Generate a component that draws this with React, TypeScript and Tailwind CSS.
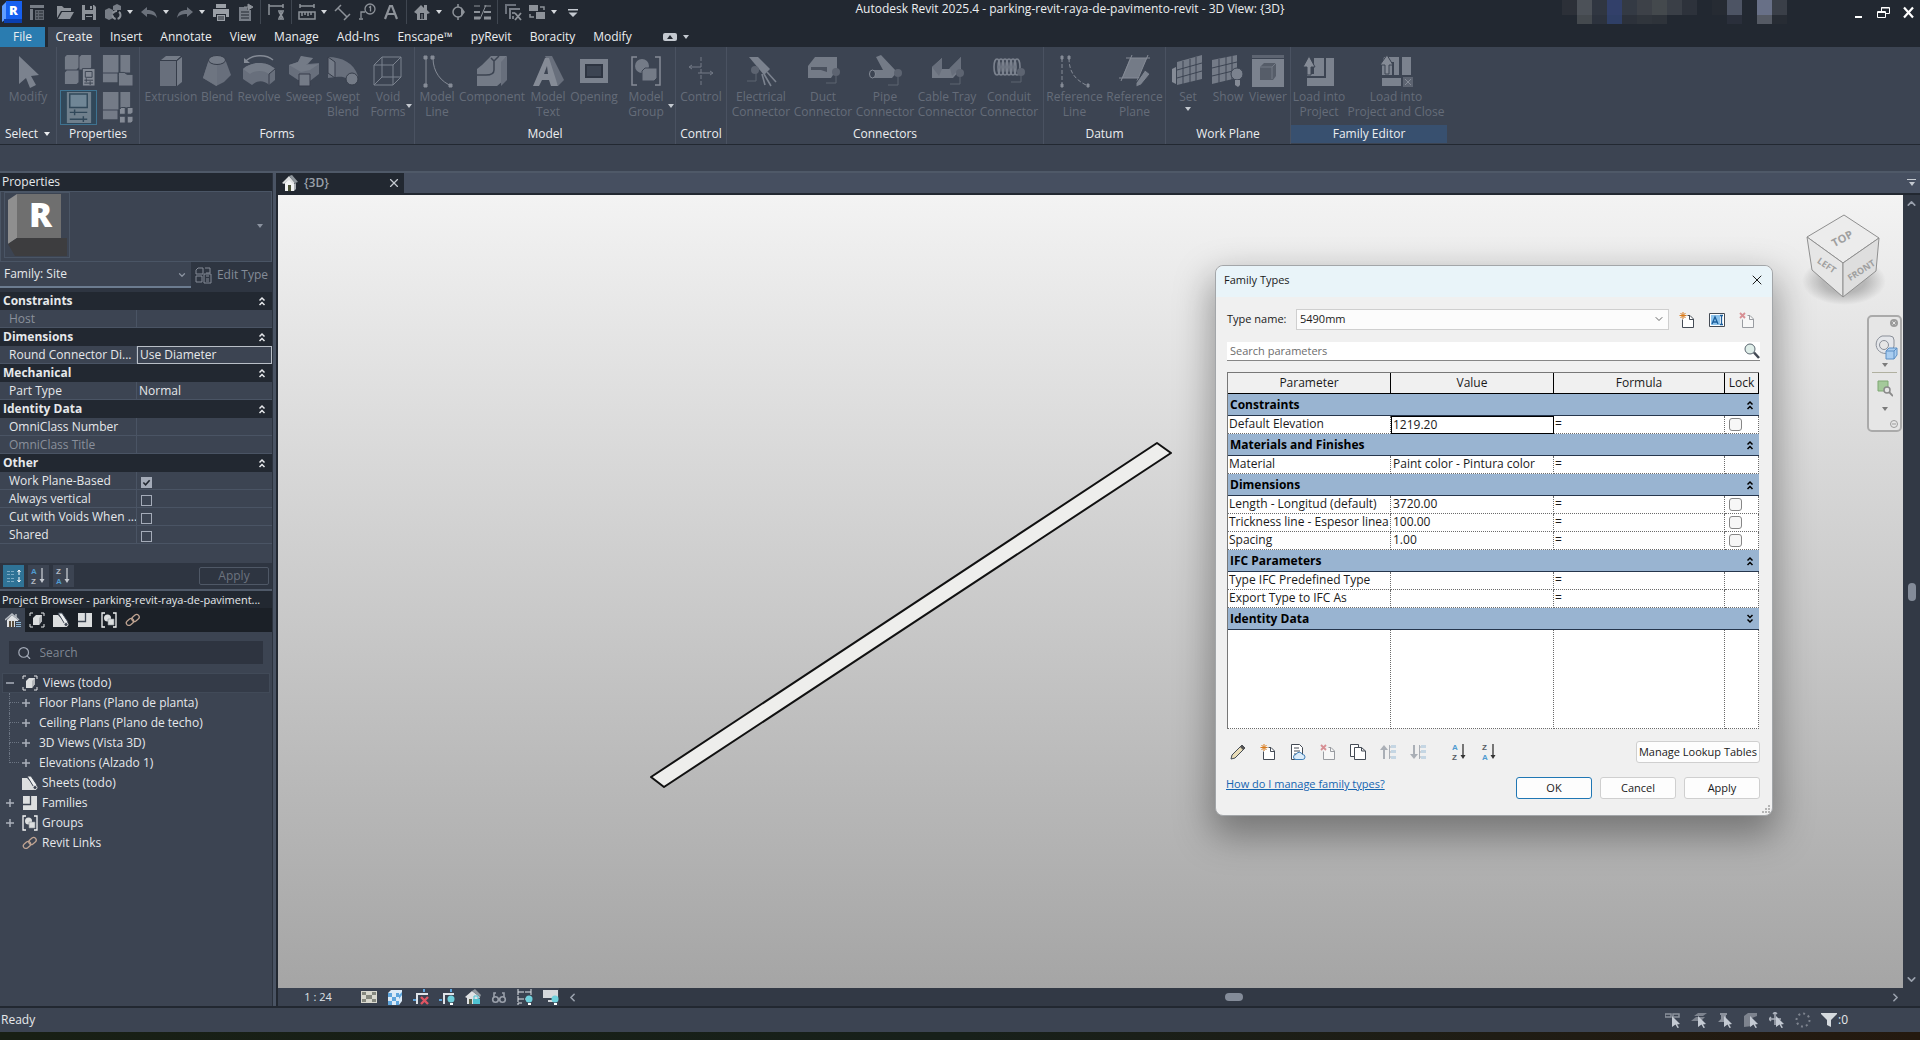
import React, { useState } from "react";
import { ChevronDown, ChevronLeft, ChevronRight, ChevronUp, Search, X } from "lucide-react";

type IconProps = { className?: string };

const Caret = ({ className = "" }: IconProps) => (
  <svg viewBox="0 0 8 5" className={`w-2 h-[5px] shrink-0 ${className}`} fill="currentColor">
    <path d="M1 0h6L4 4z" />
  </svg>
);

const DoubleChevron = ({ down = false }: { down?: boolean }) => (
  <svg viewBox="0 0 8 10" className="w-2 h-[10px]" fill="none" stroke="currentColor" strokeWidth="1.5">
    {down ? <path d="M1.5 1L4 3.5 6.5 1M1.5 5.5L4 8l2.500-2.500" /> : <path d="M1.5 4.500L4 2l2.500 2.500M1.5 9L4 6.500 6.500 9" />}
  </svg>
);

/* ---------- quick access toolbar ---------- */

const quickIcons: Record<string, React.ReactNode> = {
  recent: (
    <g>
      <path d="M2 2h14v3H2zM2 6h3v11H2z" fill="#777d86" />
      <path d="M7 7h9v10H7z" fill="#60666f" />
      <path d="M8 9h2M11 9h4M8 12h2M11 12h4M8 15h2M11 15h4" stroke="#222831" />
    </g>
  ),
  open: (
    <g fill="#8d9299">
      <path d="M1 3h5l2 2h7v3H5L1 15z" />
      <path d="M6 9h12l-4 7H2z" />
    </g>
  ),
  save: (
    <g>
      <path d="M2 2h12l2 2v13H2z" fill="#8d9299" />
      <path d="M5 2h8v5H5zM5 11h8v6H5z" fill="#222831" />
      <path d="M10 3h2v3h-2zM6 13h6v1H6z" fill="#8d9299" />
    </g>
  ),
  sync: (
    <g fill="#777d86">
      <path d="M1 7l4-2 4 2v8l-4 2-4-2zM9 3l4-2 4 2v4H9z" />
      <circle cx="12.5" cy="12" r="4" stroke="#8d9299" strokeDasharray="5 2" fill="none" strokeWidth="2" />
    </g>
  ),
  undo: <path d="M1 9l6-5v3c6 0 9 2 10 8-2-3-5-4-10-4v3z" fill="#6b717b" />,
  redo: <path d="M17 9l-6-5v3c-6 0-9 2-10 8 2-3 5-4 10-4v3z" fill="#6b717b" />,
  print: (
    <g fill="#9a9fa6">
      <path d="M4 1h10v4H4zM1 6h16v8h-3v-3H4v3H1z" />
      <path d="M5 12h8v6H5z" />
      <path d="M6 14h6M6 16h6" stroke="#222831" />
    </g>
  ),
  exportPdf: (
    <g>
      <path d="M3 4h8v3h4v11H3z" fill="#777d86" />
      <path d="M5 9h8M5 12h8M5 15h8" stroke="#222831" />
      <path d="M8 4h6M12 1l5 3-5 3z" stroke="#8d9299" fill="#8d9299" />
    </g>
  ),
  measure: (
    <g fill="none" stroke="#8d9299" strokeWidth="1.5">
      <path d="M2 1v11M16 1v4M2 3h14M11 8h6M11 16h6M14 8v8" />
      <path d="M12 9l4 6M16 9l-4 6" />
    </g>
  ),
  ruler: (
    <g fill="none" stroke="#8d9299" strokeWidth="1.5">
      <path d="M2 3h14M2 1v4M16 1v4" />
      <path d="M1 9h16v7H1zM4 9v4M7 9v3M10 9v4M13 9v3" />
    </g>
  ),
  aligned: (
    <g fill="none" stroke="#8d9299" strokeWidth="1.5">
      <path d="M4 5l9 9M1 8l6-6M10 17l6-6" />
    </g>
  ),
  tag: (
    <g fill="none" stroke="#8d9299" strokeWidth="1.3">
      <circle cx="12" cy="6" r="5" />
      <path d="M11 4.5l1.500-1v5M7 9H3v6M1 16h4" />
    </g>
  ),
  text: <path d="M3 16L8 3h2l5 13M5 11h8" fill="none" stroke="#8d9299" strokeWidth="2.2" />,
  house: (
    <g>
      <path d="M1 9l7-7 3 3V2h3v5l3 3-3 1v6H4v-6z" fill="#8d9299" />
      <path d="M7 10h4v6H7z" fill="#222831" />
      <path d="M8.5 11h1v5h-1z" fill="#8d9299" />
    </g>
  ),
  section: (
    <g fill="none" stroke="#8d9299" strokeWidth="1.5">
      <circle cx="9" cy="9" r="5" />
      <path d="M9 1v3M9 14v3" />
      <path d="M12 4l4 5-4 5z" fill="#8d9299" stroke="none" />
    </g>
  ),
  thin: (
    <g stroke="#8d9299">
      <path d="M1 3h6M11 3h7" strokeWidth="1" />
      <path d="M1 9h6M11 9h7" strokeWidth="2" />
      <path d="M1 15h6M11 15h7" strokeWidth="3" />
      <path d="M7 16L13 2" />
    </g>
  ),
  closeViews: (
    <g>
      <path d="M1 1h11v2H3v8H1z" fill="#6b717b" />
      <path d="M5 5h11v2H7v9H5zM8 9h3v2H8zM8 13h2v3H8z" fill="#777d86" />
      <path d="M11 10l6 7M17 10l-6 7" stroke="#8d9299" strokeWidth="1.8" />
    </g>
  ),
  switchViews: (
    <g>
      <path d="M1 2h9v6H1zM8 9h9v7H8z" fill="#8d9299" />
      <path d="M12 4h4v3M6 14H2v-3" fill="none" stroke="#8d9299" strokeWidth="1.5" />
    </g>
  ),
  customize: <path d="M4 6h10v1.500H4zM4.500 9.500h9L9 14z" fill="#c4c9d0" />,
};

const quickItems = [
  "recent", "gap", "open", "save", "sync", "caret", "undo", "caret", "redo", "caret", "print", "exportPdf", "sep",
  "measure", "sep", "ruler", "caret", "aligned", "tag", "text", "sep", "house", "caret", "section", "thin", "sep",
  "closeViews", "switchViews", "caret", "customize",
];

const mosaicTop = [
  "#2c3038", "#4c5158", "#303641", "#32406a", "#343a44", "#3d4148", "#44494d", "#3a3f47", "#2d323b", "#222831",
  "#262b33", "#4d5464", "#222831", "#687087", "#3a3f48",
];
const mosaicBottom = [
  "#222831", "#44494e", "#2c323d", "#2f3f66", "#2c313a", "#30353c", "#2e333a", "#222831", "#222831", "#222831",
  "#222831", "#2a2f3b", "#222831", "#555a64", "#272c34",
];

function TitleBar() {
  return (
    <header className="flex h-[27px] items-start">
      <div className="flex h-6 items-center gap-[6px] pl-[2px]">
        <svg viewBox="0 0 20 22" className="h-[22px] w-5">
          <path d="M0 5l4-4v17l-4 3z" fill="#5f9dff" />
          <path d="M4 0h16v18H4z" fill="#1660f0" />
          <path d="M2 18h18v4H2z" fill="#0a3fb0" />
          <text x="7" y="14" fontFamily="Open Sans, sans-serif" fontWeight="800" fontSize="13" fill="#fff">R</text>
        </svg>
        {quickItems.map((item, i) => {
          if (item === "gap") return <span key={i} className="-mr-[2px]" />;
          if (item === "sep") return <span key={i} className="h-6 w-px bg-[#3f4650]" />;
          if (item === "caret") return <Caret key={i} className="-ml-[2px] text-[#d5d8dc]" />;
          return (
            <button key={i} aria-label={item} className="h-[18px] w-[18px] shrink-0">
              <svg viewBox="0 0 18 18">{quickIcons[item]}</svg>
            </button>
          );
        })}
      </div>
      <h1 className="flex-1 whitespace-nowrap pr-1 text-center text-[12px] leading-[18px] text-[#eceef0]">
        Autodesk Revit 2025.4 - parking-revit-raya-de-pavimento-revit - 3D View: {"{3D}"}
      </h1>
      <div className="flex w-[358px] justify-between">
        <div>
          <div className="flex">
            {mosaicTop.map((color, i) => (
              <span key={i} className="h-[15px] w-[15px]" style={{ backgroundColor: color }} />
            ))}
          </div>
          <div className="flex">
            {mosaicBottom.map((color, i) => (
              <span key={i} className="h-[9px] w-[15px]" style={{ backgroundColor: color }} />
            ))}
          </div>
        </div>
        <div className="flex items-center gap-3 pr-[5px] text-white">
          <button aria-label="Minimize">
            <svg viewBox="0 0 13 13" className="w-[13px]"><path d="M3 10h7v2H3z" fill="currentColor" /></svg>
          </button>
          <button aria-label="Restore">
            <svg viewBox="0 0 13 13" className="w-[13px]" fill="none" stroke="currentColor">
              <path d="M4.500 5V1.500h8v6H9M4 2h8M.5 5.500h8v6h-8zM1 6.500h7" />
            </svg>
          </button>
          <button aria-label="Close">
            <svg viewBox="0 0 13 13" className="w-[13px]" stroke="currentColor" strokeWidth="2.2">
              <path d="M2 1.500l9 10M11 1.500l-9 10" />
            </svg>
          </button>
        </div>
      </div>
    </header>
  );
}

const menuTabs = [
  "Insert", "Annotate", "View", "Manage", "Add-Ins", "Enscape™", "pyRevit", "Boracity", "Modify",
];

function MenuTabs() {
  return (
    <nav className="flex h-5 text-[12px] leading-5 text-[#eceef0]">
      <button className="w-[45px] bg-[#2a7cb0]">File</button>
      <button className="ml-[3px] mr-px w-[52px] bg-[#3c4452]">Create</button>
      {menuTabs.map((tab) => (
        <button key={tab} className="px-[9px]">{tab}</button>
      ))}
      <button aria-label="Minimize ribbon" className="ml-[22px] flex items-center gap-[5px] text-[#c4c9d0]">
        <svg viewBox="0 0 14 8" className="w-[14px]">
          <rect width="14" height="8" rx="2" fill="currentColor" />
          <path d="M4 6l3-4 3 4z" fill="#222831" />
        </svg>
        <Caret />
      </button>
    </nav>
  );
}

/* ---------- ribbon ---------- */

const L = "#747b87";
const M = "#686f7c";
const D = "#3c4452";

const ribbonIcons: Record<string, React.ReactNode> = {
  modify: <path d="M8 2l20 19-8 1 5 9-6 3-4-10-7 6z" fill="#7b828e" />,
  extrusion: (
    <g>
      <path d="M6 7h16v25H6z" fill={M} />
      <path d="M7 6l5-4h15l-4 4z" fill={L} />
      <path d="M23 7l5-4v25l-5 4z" fill={L} />
      <path d="M6 6.500h16.500V32M22.500 6.500L28 2" stroke="#363d4a" fill="none" />
    </g>
  ),
  blend: (
    <g>
      <path d="M9 5h16l6 16-7 7-8 4L3 24z" fill={M} />
      <path d="M9 6l8 4v22L3 24z" fill="#6e7581" />
      <ellipse cx="17" cy="6" rx="8.500" ry="4.500" fill={L} stroke="#363d4a" />
    </g>
  ),
  revolve: (
    <g>
      <path d="M3 8C10 0 24 0 31 6" stroke="#858b96" strokeWidth="1.5" fill="none" />
      <path d="M2 4v5h6z" fill="#858b96" />
      <path d="M1 15c8-8 24-8 32 0v11l-6 5c-5-5-12-5-17 0l-9-6z" fill={M} />
      <path d="M1 15c8-8 24-8 32 0l-6 5c-5-4-14-4-19 0z" fill={L} />
      <path d="M27 31V20l6-5" fill="none" stroke="#363d4a" />
    </g>
  ),
  sweep: (
    <g>
      <path d="M2 11l9-3 3-6 6 2h6l-5 6 11-1v11l-9 7-12-1-9-6z" fill={M} />
      <path d="M2 11l9-3 3-6 12 2-7 7 13-1-9 6-9 2z" fill={L} />
      <path d="M12 20h11v12H12z" fill={L} stroke="#363d4a" />
    </g>
  ),
  sweptBlend: (
    <g>
      <path d="M2 3c14 0 26 6 30 19l-8 6c-3-5-8-6-14-5l-8 1z" fill={M} />
      <path d="M2 3l7 5v16l-7-5z" fill={L} stroke="#363d4a" />
      <circle cx="26" cy="25" r="6" fill={L} stroke="#363d4a" />
    </g>
  ),
  voidForms: (
    <g fill="none" stroke="#7b828e">
      <path d="M3 11h19v20H3zM3 11l8-8h19v20l-8 8M22 11l8-8M11 3v20h19M11 23l-8 8" />
    </g>
  ),
  modelLine: (
    <g stroke="#858b96" fill="none">
      <path d="M6 4v28M13 4c0 14 8 24 19 28" />
      <path d="M4 2h3v3H4zM11 2h3v3h-3zM4 30h3v3H4zM29 30h3v3h-3z" fill="#858b96" />
    </g>
  ),
  component: (
    <g>
      <path d="M2 15l5-4 9-9h16l-4 5v20l-6 5H2z" fill={L} />
      <path d="M26 8l6-6v24l-6 6z" fill={M} />
      <path d="M16 4l3 3v9c0 3-3 5-8 5H2M19 7l5-5" stroke={D} fill="none" strokeWidth="1.5" />
    </g>
  ),
  modelText: (
    <g>
      <path d="M14 2h7l12 24-6 6z" fill={M} />
      <path d="M2 32L14 4h4l9 28h-7l-2-6h-7l-3 6zM13 20h4l-1-8z" fill="#858b96" fillRule="evenodd" />
    </g>
  ),
  opening: (
    <g>
      <path d="M3 5h28v24H3zM9 11v12h16V11z" fill="#7b828e" fillRule="evenodd" />
      <path d="M9 11h16v12H9z" fill="none" stroke="#2d3441" strokeWidth="2" />
      <path d="M12 14h10v6H12z" fill={D} />
    </g>
  ),
  modelGroup: (
    <g>
      <path d="M8 3H3v28h5M26 3h5v28h-5" stroke="#858b96" fill="none" strokeWidth="1.5" />
      <circle cx="13" cy="12" r="7" fill={L} />
      <path d="M13 17l3-3h12v10l-3 3H13z" fill={L} stroke={D} />
    </g>
  ),
  control: (
    <g stroke="#747b87" fill="none">
      <path d="M17 3v28" strokeDasharray="4 2" />
      <path d="M6 13h11M8 11l-3 2 3 2M14 19h14M26 17l3 2-3 2" />
    </g>
  ),
  electrical: (
    <g>
      <path d="M5 3h9l12 12-6 6z" fill="#7b828e" />
      <path d="M23 18l9 10M20 20l7 12M18 20l3 11" stroke="#7b828e" strokeWidth="1.6" />
      <circle cx="11" cy="16" r="4" fill="#5d6471" />
      <path d="M12 19v8H3" stroke="#5d6471" fill="none" />
    </g>
  ),
  duct: (
    <g>
      <path d="M2 12l7-9h22v12l-6 9H2z" fill={L} />
      <path d="M5 13h16v5l-6-2H5z" fill="#4a515e" />
      <circle cx="30" cy="18" r="4" fill="#5d6471" />
      <path d="M30 22v7H20" stroke="#5d6471" fill="none" />
    </g>
  ),
  pipe: (
    <g>
      <path d="M8 3l5-2 16 17-5 6H5c-4 0-4-8 0-8h10z" fill={L} />
      <ellipse cx="4.500" cy="20" rx="3" ry="4" fill={D} stroke="#858b96" />
      <circle cx="30" cy="19" r="4" fill="#5d6471" />
      <path d="M30 23v8H20" stroke="#5d6471" fill="none" />
    </g>
  ),
  cableTray: (
    <g>
      <path d="M2 13L12 4v11h7L31 3v12l-8 9H2z" fill={L} />
      <path d="M2 13l7 9 3-7V4zM20 14L31 3v11l-9 8z" fill={M} />
      <circle cx="30" cy="19" r="4" fill="#5d6471" />
      <path d="M30 22v8H20" stroke="#5d6471" fill="none" />
    </g>
  ),
  conduit: (
    <g fill="none" stroke="#7b828e" strokeWidth="1.600">
      {[5, 9, 13, 17, 21, 25].map((x) => <ellipse key={x} cx={x} cy="13" rx="3" ry="8" />)}
      <circle cx="29" cy="18" r="4" fill="#5d6471" stroke="none" />
      <path d="M29 21v7H19" stroke="#5d6471" strokeWidth="1" />
    </g>
  ),
  referenceLine: (
    <g stroke="#858b96" fill="none">
      <path d="M4 4v28M11 4c0 14 6 22 19 28" strokeDasharray="4 2" />
      <path d="M3 2h2v3H3zM10 2h2v3h-2zM3 30h2v3H3zM29 30h2v3h-2z" fill="#858b96" />
    </g>
  ),
  referencePlane: (
    <g>
      <path d="M12 4h17l-9 20H4z" fill={L} />
      <path d="M8 4h24M1 24h22M14 1L3 27M30 1L19 27" stroke="#858b96" fill="none" />
      <path d="M18 29l9-13 5 4-9 11-5 2z" fill="#7b828e" stroke={D} />
    </g>
  ),
  setPlane: (
    <g>
      <path d="M1 15l4-2v17l-4-2z" fill="#858b96" />
      <path d="M6 8l25-7v24L6 31z" fill={L} />
      <path d="M12 7v23M19 5v24M25 3v24M6 16l25-7M6 24l25-7" stroke={D} />
    </g>
  ),
  showPlane: (
    <g>
      <path d="M1 6l25-5v23L1 30z" fill={L} />
      <path d="M8 5v24M15 3v24M21 2v24M1 14l25-6M1 22l25-6" stroke={D} />
      <circle cx="26" cy="20" r="6" fill="#7b828e" stroke={D} />
      <path d="M24 26h5v5l-2 2-3-2z" fill="#858b96" />
    </g>
  ),
  viewer: (
    <g>
      <path d="M1 1h32v3H1z" fill="#5d6471" />
      <path d="M1 5h32v28H1z" fill="#7b828e" />
      <path d="M9 13l4-4h12v13l-3 4H9z" fill="#565d69" />
      <path d="M9 13h12v12M21 13l4-4" stroke="#737a86" fill="none" />
    </g>
  ),
  loadProject: (
    <g>
      <path d="M12 4h20v28H5V20h7z" fill="#7b828e" />
      <path d="M23 4v19H5" fill="none" stroke={D} strokeWidth="2" />
      <path d="M1 13L7 2l6 11h-4v8H5v-8z" fill="#858b96" stroke={D} />
    </g>
  ),
  loadClose: (
    <g>
      <path d="M5 3h15v18H3V10zM23 3h9v18h-9zM3 24h19v8H3z" fill="#7b828e" />
      <path d="M14 8v13" stroke={D} strokeWidth="2" />
      <path d="M1 11L8 1l6 10h-4v9H6v-9z" fill="#858b96" stroke={D} />
      <path d="M24 23h10v10H24z" fill="#5d6471" />
      <path d="M26 25l6 6M32 25l-6 6" stroke="#858b96" />
    </g>
  ),
  typeProps: (
    <g>
      <path d="M3 3l2-2h12v13l-2 2H3zM18 3l2-2h10v13l-2 2H18zM3 19l2-2h12v12l-2 2H3z" fill={L} />
      <path d="M21 15h13v18H21z" fill="#858b96" stroke={D} />
      <path d="M24 18h7v6h-7zM23 27h9M23 30h9M25 25v4M29 28v4" stroke={D} fill="none" />
    </g>
  ),
  familyCategory: (
    <g>
      <path d="M2 1h16v18H2zM20 1h10v18H20zM2 20h15v9H2z" fill={L} />
      <path d="M18 22v-3h6l3 2h6v12H18z" fill={L} stroke={D} />
    </g>
  ),
  propsPalette: (
    <g>
      <path d="M5 1h25v32H5z" fill="#6f7f8c" />
      <path d="M8 3h18v14H8z" fill="#708696" stroke="#31485a" strokeWidth="1.5" />
      <path d="M8 22h18M8 29h18M13 19v6M22 26v6" stroke="#31485a" strokeWidth="1.5" />
    </g>
  ),
  familyTypes: (
    <g>
      <path d="M2 1h16v18H2zM20 1h10v16H20zM2 20h15v9H2z" fill={L} />
      <path d="M19 19l2-2h4v7h-6zM27 17h6v5l-2 2h-4zM19 26h6v7h-6zM27 26h6v5l-2 2h-4z" fill="#858b96" stroke={D} />
    </g>
  ),
};

type RibbonItem = { icon: string; lines: string[]; width: string; menu?: "side" | "below" };
type RibbonPanel = { label: string; width: string; items: RibbonItem[]; highlight?: boolean };

const ribbonPanels: RibbonPanel[] = [
  {
    label: "Forms",
    width: "w-[275px]",
    items: [
      { icon: "extrusion", lines: ["Extrusion"], width: "w-[60px]" },
      { icon: "blend", lines: ["Blend"], width: "w-8" },
      { icon: "revolve", lines: ["Revolve"], width: "w-[52px]" },
      { icon: "sweep", lines: ["Sweep"], width: "w-[38px]" },
      { icon: "sweptBlend", lines: ["Swept", "Blend"], width: "w-10" },
      { icon: "voidForms", lines: ["Void", "Forms"], width: "w-[50px]", menu: "side" },
    ],
  },
  {
    label: "Model",
    width: "w-[261px]",
    items: [
      { icon: "modelLine", lines: ["Model", "Line"], width: "w-11" },
      { icon: "component", lines: ["Component"], width: "w-[66px]" },
      { icon: "modelText", lines: ["Model", "Text"], width: "w-[46px]" },
      { icon: "opening", lines: ["Opening"], width: "w-[46px]" },
      { icon: "modelGroup", lines: ["Model", "Group"], width: "w-[58px]", menu: "side" },
    ],
  },
  {
    label: "Control",
    width: "w-[51px]",
    items: [{ icon: "control", lines: ["Control"], width: "w-[50px]" }],
  },
  {
    label: "Connectors",
    width: "w-[317px]",
    items: [
      { icon: "electrical", lines: ["Electrical", "Connector"], width: "w-[62px]" },
      { icon: "duct", lines: ["Duct", "Connector"], width: "w-[62px]" },
      { icon: "pipe", lines: ["Pipe", "Connector"], width: "w-[62px]" },
      { icon: "cableTray", lines: ["Cable Tray", "Connector"], width: "w-[62px]" },
      { icon: "conduit", lines: ["Conduit", "Connector"], width: "w-[62px]" },
    ],
  },
  {
    label: "Datum",
    width: "w-[122px]",
    items: [
      { icon: "referenceLine", lines: ["Reference", "Line"], width: "w-[60px]" },
      { icon: "referencePlane", lines: ["Reference", "Plane"], width: "w-[60px]" },
    ],
  },
  {
    label: "Work Plane",
    width: "w-[125px]",
    items: [
      { icon: "setPlane", lines: ["Set"], width: "w-10", menu: "below" },
      { icon: "showPlane", lines: ["Show"], width: "w-10" },
      { icon: "viewer", lines: ["Viewer"], width: "w-10" },
    ],
  },
  {
    label: "Family Editor",
    width: "w-[156px]",
    highlight: true,
    items: [
      { icon: "loadProject", lines: ["Load into", "Project"], width: "w-[54px]" },
      { icon: "loadClose", lines: ["Load into", "Project and Close"], width: "w-[100px]" },
    ],
  },
];

function RibbonButton({ icon, lines, width, menu }: RibbonItem) {
  return (
    <button className={`relative flex shrink-0 flex-col items-center whitespace-nowrap ${width}`}>
      <svg viewBox="0 0 34 34" className="h-[34px] w-[34px]">{ribbonIcons[icon]}</svg>
      <span className="mt-px text-[12px] leading-[15px] text-[#656c79]">
        {lines.map((line) => (
          <span key={line} className="block">{line}</span>
        ))}
      </span>
      {menu === "below" && <Caret className="mt-[3px] text-[#c4c9d0]" />}
      {menu === "side" && <Caret className="absolute right-0 top-[50px] text-[#c4c9d0]" />}
    </button>
  );
}

function Ribbon() {
  return (
    <section className="flex h-[98px] border-b border-[#222831] bg-[#3c4452] text-[12px]">
      <div className="flex w-[57px] shrink-0 flex-col border-r border-[#4a5261]">
        <div className="flex h-[78px] justify-center pt-[7px]">
          <RibbonButton icon="modify" lines={["Modify"]} width="w-[50px]" />
        </div>
        <button className="flex items-center gap-[5px] pl-[5px] leading-[18px] text-[#eceef0]">
          Select <Caret />
        </button>
      </div>
      <div className="flex w-[83px] shrink-0 flex-col border-r border-[#4a5261]">
        <div className="grid h-[78px] grid-cols-2 gap-x-[3px] gap-y-px px-[3px] pt-[6px]">
          {["typeProps", "familyCategory", "propsPalette", "familyTypes"].map((name) => (
            <button
              key={name}
              aria-label={name}
              className={`flex h-[35px] items-center justify-center ${
                name === "propsPalette" ? "border border-[#3f7391] bg-[#31485a]" : ""
              }`}
            >
              <svg viewBox="0 0 34 34" className="h-[33px] w-[33px]">{ribbonIcons[name]}</svg>
            </button>
          ))}
        </div>
        <div className="text-center leading-[18px] text-[#eceef0]">Properties</div>
      </div>
      {ribbonPanels.map((panel) => (
        <div
          key={panel.label}
          className={`flex shrink-0 flex-col ${panel.width} ${panel.highlight ? "" : "border-r border-[#4a5261]"}`}
        >
          <div className="flex h-[78px] justify-center pt-[7px]">
            {panel.items.map((item) => (
              <RibbonButton key={item.icon} {...item} />
            ))}
          </div>
          <div className={`text-center leading-[18px] text-[#eceef0] ${panel.highlight ? "bg-[#38506f]" : ""}`}>
            {panel.label}
          </div>
        </div>
      ))}
    </section>
  );
}

/* ---------- properties palette ---------- */

type PropRow = { name: string; value?: string; checked?: boolean; dim?: boolean; selected?: boolean };

const propGroups: { title: string; rows: PropRow[] }[] = [
  { title: "Constraints", rows: [{ name: "Host", dim: true }] },
  { title: "Dimensions", rows: [{ name: "Round Connector Di...", value: "Use Diameter", selected: true }] },
  { title: "Mechanical", rows: [{ name: "Part Type", value: "Normal" }] },
  { title: "Identity Data", rows: [{ name: "OmniClass Number" }, { name: "OmniClass Title", dim: true }] },
  {
    title: "Other",
    rows: [
      { name: "Work Plane-Based", checked: true },
      { name: "Always vertical", checked: false },
      { name: "Cut with Voids When ...", checked: false },
      { name: "Shared", checked: false },
    ],
  },
];

function PropCheckbox({ label, initial }: { label: string; initial: boolean }) {
  const [checked, setChecked] = useState(initial);
  return (
    <input
      type="checkbox"
      aria-label={label}
      checked={checked}
      onChange={() => setChecked(!checked)}
      className="mt-1 ml-[2px] block h-[11px] w-[11px] appearance-none border border-[#a4abb8] checked:bg-[#a4abb8] checked:bg-[url('data:image/svg+xml,%3Csvg%20xmlns=%22http://www.w3.org/2000/svg%22%20viewBox=%220%200%2010%2010%22%3E%3Cpath%20d=%22M1.5%205l2.5%202.5L8.5%202.5%22%20fill=%22none%22%20stroke=%22%23222831%22%20stroke-width=%221.8%22/%3E%3C/svg%3E')]"
    />
  );
}

const SortLetters = ({ top, bottom, color, arrow }: { top: string; bottom: string; color: string; arrow: string }) => (
  <svg
    viewBox="0 0 18 20"
    className="h-5 w-[18px] overflow-visible"
    fontFamily="Liberation Sans, sans-serif"
    fontSize="8"
    fontWeight="700"
  >
    <text x="2" y="8" fill={top === "A" ? "#4f9bd0" : color}>{top}</text>
    <text x="2" y="18" fill={bottom === "A" ? "#4f9bd0" : color}>{bottom}</text>
    <path d="M13 2v13" stroke={arrow} strokeWidth="1.3" />
    <path d="M10.5 13h5L13 17z" fill={arrow} />
  </svg>
);

function PropertiesPalette() {
  return (
    <section>
      <h2 className="h-[18px] bg-[#222831] pl-[2px] leading-[18px]">Properties</h2>
      <div className="flex h-[71px] items-start justify-between border border-[#4a5565] px-[3px]">
        <div className="h-[66px] w-[66px] border border-[#4a5565]">
          <svg viewBox="0 0 64 64">
            <path d="M3 7l9-6v44l-9 6z" fill="#8f8f8f" />
            <path d="M12 1h44v44H12z" fill="#6f6f6f" />
            <path d="M3 51l9-6h50v18H10z" fill="#3d3d3f" />
            <text x="24" y="34" fontFamily="Open Sans, sans-serif" fontWeight="800" fontSize="34" fill="#fff">R</text>
          </svg>
        </div>
        <Caret className="mt-8 mr-1 text-[#8b93a0]" />
      </div>
      <div className="flex h-[30px] bg-[#2e3541]">
        <div className="relative mb-1 w-[191px] border-b-2 border-[#6c7c90] bg-[#3c4452]">
          <select aria-label="Family" className="h-full w-full appearance-none pl-1 text-[12px]">
            <option>Family: Site</option>
          </select>
          <ChevronDown size={10} strokeWidth={3} className="absolute right-1 top-2 text-[#8b93a0]" />
        </div>
        <button className="flex flex-1 items-center justify-center gap-[5px] pb-1 text-[#848b97]">
          <svg viewBox="0 0 17 17" className="w-[17px]" fill="none" stroke="currentColor">
            <path d="M1 3l2-2h5v6H1zM10 1h5v5h-4M1 9h6v6H1z" />
            <path d="M9 7h7v9H9zM11 9h3M11 12h3M11 14h3" />
          </svg>
          Edit Type
        </button>
      </div>
      <table className="w-full table-fixed border-separate border-spacing-0">
        <colgroup>
          <col className="w-[137px]" />
          <col />
        </colgroup>
        {propGroups.map((group) => (
          <tbody key={group.title}>
            <tr className="h-[18px] bg-[#222831]">
              <th colSpan={2} className="pl-[3px] text-left leading-[18px]">
                <div className="flex items-center justify-between pr-[6px]">
                  {group.title}
                  <button aria-label={`Collapse ${group.title}`}><DoubleChevron /></button>
                </div>
              </th>
            </tr>
            {group.rows.map((row) => (
              <tr key={row.name} className={row.dim ? "text-[#8a909b]" : ""}>
                <td className="h-[18px] overflow-hidden whitespace-nowrap border-r border-b border-[#4a5464] pl-[9px] leading-[17px]">
                  {row.name}
                </td>
                <td
                  className={`h-[18px] leading-[16px] pl-[2px] ${
                    row.selected ? "border border-[#b9bfc7]" : "border-b border-[#4a5464]"
                  }`}
                >
                  {row.checked === undefined ? row.value : <PropCheckbox label={row.name} initial={row.checked} />}
                </td>
              </tr>
            ))}
          </tbody>
        ))}
      </table>
      <div className="mt-[19px] flex h-[26px] items-center gap-1 bg-[#2e3541] px-[3px]">
        <button aria-label="Group" className="flex h-[22px] w-[21px] items-center justify-center bg-[#2f7396]">
          <svg viewBox="0 0 16 16" className="w-4" stroke="#9cc2d6">
            <path d="M1 3.5h8M1 6.500h8M1 10.5h8M1 13.5h8" strokeDasharray="3 1" strokeOpacity="0.7" />
            <path d="M13 2v5M13 9v5M11.5 4L13 2l1.500 2M11.500 12l1.500 2 1.500-2" stroke="#fff" fill="none" />
          </svg>
        </button>
        <button aria-label="Sort ascending" className="flex h-[22px] w-[21px] items-center bg-[#3c4452] pl-px">
          <SortLetters top="A" bottom="Z" color="#b5bbc4" arrow="#c4c9d0" />
        </button>
        <button aria-label="Sort descending" className="flex h-[22px] w-[21px] items-center bg-[#3c4452] pl-px">
          <SortLetters top="Z" bottom="A" color="#b5bbc4" arrow="#c4c9d0" />
        </button>
        <button disabled className="ml-auto h-[18px] w-[70px] rounded-[2px] border border-[#4f5866] leading-[16px] text-[#6c737f]">
          Apply
        </button>
      </div>
    </section>
  );
}

/* ---------- project browser ---------- */

const treeIcons: Record<string, React.ReactNode> = {
  views: (
    <g>
      <path d="M1 4V1h3M12 1h3v3M1 12v3h3M12 15h3v-3" fill="none" stroke="#e4e6e8" />
      <path d="M4 6l3-3h6v6l-3 4H4z" fill="#dcdedf" />
      <path d="M10 6l3-3v6l-3 4z" fill="#b5b8bb" />
    </g>
  ),
  sheets: (
    <g>
      <path d="M0 3h5l9 9v3H0z" fill="#dcdedf" />
      <path d="M5 1h4l6 9-2 4z" fill="#eceeef" stroke="#3c4452" />
      <circle cx="13" cy="12.5" r="2" fill="#3c4452" stroke="#dcdedf" />
    </g>
  ),
  families: (
    <g>
      <path d="M1 1h14v14H1z" fill="#dcdedf" />
      <path d="M8.5 1v8.500H1" fill="none" stroke="#3c4452" strokeWidth="1.3" />
    </g>
  ),
  groups: (
    <g>
      <path d="M4 1H1v14h3M12 1h3v14h-3" fill="none" stroke="#f2f3f4" strokeWidth="1.3" />
      <circle cx="6.5" cy="6" r="3.5" fill="#dcdedf" />
      <path d="M7 7h6v6H7z" fill="#dcdedf" stroke="#8b9099" strokeWidth="0.6" />
    </g>
  ),
  links: (
    <g fill="none" stroke="#c0a492" strokeWidth="1.3">
      <rect x="1" y="7.5" width="8" height="5" rx="2.5" transform="rotate(-40 5 10)" />
      <rect x="6.5" y="3.5" width="8" height="5" rx="2.5" transform="rotate(-40 10.5 6)" />
    </g>
  ),
  home: (
    <g>
      <path d="M2 8l5-5 6 5v7H2z" fill="#dfe1e3" />
      <path d="M0 8l7-6 7 6M11 2v3" fill="none" stroke="#b5bac1" strokeWidth="1.5" />
      <path d="M4 9h2v6H4zM7 9h2v6H7z" fill="#5b5040" />
      <path d="M10 9h6v7h-6z" fill="#3c4452" />
      <path d="M11 10.500h5M11 12.5h5M11 14.5h5" stroke="#8fb7d4" />
    </g>
  ),
};

const TreeIcon = ({ name }: { name: string }) => (
  <svg viewBox="0 0 16 16" className="h-4 w-4 shrink-0">{treeIcons[name]}</svg>
);

const viewFolders = [
  "Floor Plans (Plano de planta)",
  "Ceiling Plans (Plano de techo)",
  "3D Views (Vista 3D)",
  "Elevations (Alzado 1)",
];

const rootFolders = [
  { label: "Sheets (todo)", icon: "sheets", expandable: false },
  { label: "Families", icon: "families", expandable: true },
  { label: "Groups", icon: "groups", expandable: true },
  { label: "Revit Links", icon: "links", expandable: false },
];

const Toggle = ({ minus = false }: { minus?: boolean }) => (
  <svg viewBox="0 0 8 8" className="h-2 w-2 shrink-0" stroke="#aab0bb" strokeWidth="1.5">
    <path d={minus ? "M0 4h8" : "M0 4h8M4 0v8"} />
  </svg>
);

function ProjectBrowser() {
  return (
    <section className="min-h-0 flex-1 border-t-2 border-[#4f5968]">
      <h2 className="h-[17px] whitespace-nowrap bg-[#222831] pl-[2px] text-[11px] leading-[17px]">
        Project Browser - parking-revit-raya-de-paviment...
      </h2>
      <div className="flex h-6 bg-[#1b2027]">
        {["home", "views", "sheets", "families", "groups", "links"].map((name) => (
          <button
            key={name}
            aria-label={name}
            className={`flex items-center justify-center ${name === "home" ? "w-[25px] bg-[#3c4452]" : "w-6"}`}
          >
            <TreeIcon name={name} />
          </button>
        ))}
      </div>
      <label className="mx-[9px] mt-[9px] flex h-[23px] items-center gap-2 bg-[#2e3440] pl-2">
        <Search size={16} className="text-[#a4abb8]" />
        <input
          aria-label="Search project browser"
          placeholder="Search"
          className="w-full bg-transparent outline-none placeholder:text-[#7f8692]"
        />
      </label>
      <ul className="mt-[9px] leading-5">
        <li>
          <div className="mx-[2px] flex h-5 items-center border border-[#414a58] bg-[#343b48] pl-[3px]">
            <Toggle minus />
            <span className="ml-2"><TreeIcon name="views" /></span>
            <span className="ml-[5px]">Views (todo)</span>
          </div>
          <ul>
            {viewFolders.map((folder, i) => (
              <li key={folder} className="flex h-5 items-center pl-[9px]">
                <span className="flex h-full w-[10px] flex-col">
                  <span className="h-1/2 w-full border-b border-l border-dotted border-[#6c7583]" />
                  <span className={`h-1/2 ${i < 3 ? "border-l border-dotted border-[#6c7583]" : ""}`} />
                </span>
                <span className="ml-[3px]"><Toggle /></span>
                <span className="ml-[9px]">{folder}</span>
              </li>
            ))}
          </ul>
        </li>
        {rootFolders.map((folder) => (
          <li key={folder.label} className="flex h-5 items-center pl-[6px]">
            {folder.expandable ? <Toggle /> : <span className="w-2" />}
            <span className="ml-2"><TreeIcon name={folder.icon} /></span>
            <span className="ml-1">{folder.label}</span>
          </li>
        ))}
      </ul>
    </section>
  );
}

/* ---------- view area ---------- */

function ViewCube() {
  return (
    <svg viewBox="0 0 90 100" className="absolute right-[14px] top-3 h-[100px] w-[90px]">
      <defs>
        <radialGradient id="cubeShadow">
          <stop offset="0.5" stopColor="#000" stopOpacity="0.22" />
          <stop offset="1" stopColor="#000" stopOpacity="0" />
        </radialGradient>
      </defs>
      <ellipse cx="45" cy="74" rx="42" ry="24" fill="url(#cubeShadow)" />
      <g stroke="#8f8f8f" strokeLinejoin="round">
        <path d="M45 8L8 30l36 26 36-25z" fill="#ececec" />
        <path d="M8 30l5 33 31 27V56z" fill="#e6e6e6" />
        <path d="M44 56v34l33-26 3-33z" fill="#dedede" />
      </g>
      <g fontFamily="Open Sans, sans-serif" fontWeight="700" fill="#a0a0a0" textAnchor="middle">
        <text fontSize="11" transform="translate(45 35) rotate(-28)">TOP</text>
        <text fontSize="9" transform="translate(26 61) rotate(34)">LEFT</text>
        <text fontSize="9" transform="translate(64 66) rotate(-33)">FRONT</text>
      </g>
    </svg>
  );
}

function NavigationBar() {
  return (
    <div className="absolute right-px top-[120px] flex h-[117px] w-[35px] flex-col items-center rounded-[5px] border-2 border-[#aaa] bg-[#e6e6e6] text-[#7b7b7b]">
      <svg viewBox="0 0 8 8" className="mt-[2px] mr-[2px] w-2 self-end">
        <circle cx="4" cy="4" r="4" fill="#9b9b9b" />
        <path d="M2.5 2.5l3 3M5.500 2.5l-3 3" stroke="#e6e6e6" />
      </svg>
      <button aria-label="Steering wheel" className="mt-[7px]">
        <svg viewBox="0 0 26 26" className="w-[26px]">
          <path d="M10 2h8a4 4 0 014 4v6a9 9 0 11-12-10z" fill="#e4e6ea" stroke="#8a8f98" />
          <circle cx="12" cy="11" r="4.5" fill="#e6e6e6" stroke="#8a8f98" />
          <path d="M14 17l3-3h8v7l-3 4h-8z" fill="#a9cdf0" stroke="#5c8fc4" />
          <path d="M14 17h8v8M22 17l3-3" fill="none" stroke="#5c8fc4" />
        </svg>
      </button>
      <Caret className="mt-[3px]" />
      <hr className="mt-1 w-[25px] border-[#b0b0a0]" />
      <button aria-label="Zoom region" className="mt-[7px]">
        <svg viewBox="0 0 16 17" className="w-4">
          <path d="M1 1h10v10H1z" fill="#a4c99a" stroke="#7fa873" />
          <circle cx="10" cy="10" r="3" fill="#e6e6e6" stroke="#8a8a8a" strokeWidth="1.5" />
          <path d="M12 12l4 4" stroke="#8a8a8a" strokeWidth="1.8" />
        </svg>
      </button>
      <Caret className="mt-[10px]" />
      <svg viewBox="0 0 8 8" className="mt-auto mr-[2px] mb-[2px] w-2 self-end">
        <circle cx="4" cy="4" r="3.5" fill="none" stroke="#9b9b9b" />
        <path d="M2 4h4" stroke="#9b9b9b" />
      </svg>
    </div>
  );
}

const viewControls: React.ReactNode[] = [
  <g key="detail">
    <path d="M0 2h16v12H0z" fill="#d9d9cf" />
    <path d="M1 3h4v3H1zM11 3h4v3h-4zM5 6h6v4H5zM1 10h4v3H1zM11 10h4v3h-4z" fill="#85887f" />
  </g>,
  <g key="style">
    <path d="M1 4l3-3h11v11l-3 4H1z" fill="#dcebf7" />
    <path d="M1 4h4v4H1zM9 4h3v4H9zM5 8h4v4H5zM1 12h4v4H1zM9 12h3v4H9zM12 6l3-3v3l-3 4z" fill="#5ea5dc" />
  </g>,
  <g key="crop">
    <path d="M4 15V5h11" stroke="#dfe3e8" strokeWidth="2" fill="none" />
    <path d="M0 11h3M11 0v3" stroke="#5ea5dc" strokeWidth="2" />
    <path d="M8 8l7 7M15 8l-7 7" stroke="#e05563" strokeWidth="2.4" />
  </g>,
  <g key="cropRegion">
    <path d="M5 15V5h10" stroke="#dfe3e8" strokeWidth="2" fill="none" />
    <path d="M0 11h3M12 0v3" stroke="#5ea5dc" strokeWidth="2" />
    <circle cx="12" cy="10" r="3.5" fill="#6fd0dc" />
    <path d="M11 14h3v2h-3z" fill="#fff" />
  </g>,
  <g key="lock">
    <path d="M0 8l7-6 8 6-1 2-1-1v6H2V9z" fill="#dfe1e3" />
    <path d="M7 2l3-2 6 6-1 2z" fill="#8f969c" />
    <path d="M4 10h3v5H4z" fill="#5b6048" />
    <path d="M8 10h7v5H8z" fill="#4fc3d2" />
    <path d="M9 10V7h4v3" fill="none" stroke="#4fc3d2" />
  </g>,
  <g key="temporary" fill="none" stroke="#9aa0aa" strokeWidth="1.6">
    <circle cx="4.5" cy="10.5" r="2.8" />
    <circle cx="11.5" cy="10.5" r="2.8" />
    <path d="M3 8V4h2M13 8V4h-2" />
  </g>,
  <g key="constraints">
    <path d="M1 0v16M14 0v6M1 3h13M1 10h8M1 14h4" stroke="#dfe3e8" fill="none" strokeDasharray="6 1" />
    <circle cx="12" cy="10" r="3.5" fill="#6fd0dc" />
    <path d="M11 14h3v2h-3z" fill="#fff" />
  </g>,
  <g key="displacement">
    <path d="M0 1h15v8H0zM5 11h5v2H5z" fill="#d5d8dc" />
    <circle cx="12" cy="10" r="3.5" fill="#6fd0dc" />
    <path d="M11 14h3v2h-3z" fill="#fff" />
  </g>,
];

function ViewArea({ children }: { children: React.ReactNode }) {
  return (
    <div className="flex min-w-0 flex-1 flex-col border-l-2 border-[#222831]">
      <div className="flex h-[22px] items-stretch border-b-2 border-[#222831] bg-[#464f60]">
        <div className="flex w-[126px] items-center bg-[#222831] pr-[3px] pl-1">
          <svg viewBox="0 0 16 16" className="w-4">
            <path d="M3 8l4-4 5 4v8H3z" fill="#f2f3f4" />
            <path d="M12 9l2-1v6l-2 2z" fill="#a9adb2" />
            <path d="M0 8l7-7 6 7-2 1-4-4-5 4z" fill="#dcdedf" />
            <path d="M7 1l3-1 6 7-3 1z" fill="#8f969c" />
            <path d="M6 10h3v6H6z" fill="#4a5236" />
          </svg>
          <span className="ml-[6px] font-semibold text-[#9aa0aa]">{"{3D}"}</span>
          <button aria-label="Close view" className="ml-auto"><X size={14} className="text-[#c4c9d0]" /></button>
        </div>
        <button aria-label="View list" className="ml-auto mr-1 flex flex-col items-center justify-center gap-[2px] text-[#c4c9d0]">
          <span className="h-px w-[9px] bg-current" />
          <Caret />
        </button>
      </div>
      <div className="flex min-h-0 flex-1">
        <div className="relative min-w-0 flex-1 bg-linear-to-b from-[#f3f3f3] to-[#a5a5a5]">
          <svg className="absolute inset-0 h-full w-full">
            <path d="M879 248l14 10-507 334-13-10z" fill="#eeeeec" stroke="#111" strokeWidth="2" strokeLinejoin="round" />
          </svg>
          <ViewCube />
          <NavigationBar />
          {children}
        </div>
        <div className="flex w-[17px] flex-col items-center justify-between bg-[#323945] py-[2px] text-[#9aa1ad]">
          <button aria-label="Scroll up"><ChevronUp size={13} strokeWidth={3} /></button>
          <span className="h-[18px] w-2 rounded-full bg-[#848c99]" />
          <button aria-label="Scroll down"><ChevronDown size={13} strokeWidth={3} /></button>
        </div>
      </div>
      <div className="flex h-[18px] items-center bg-[#323945]">
        <div className="flex h-full items-center gap-[10px] bg-[#3a4250] pl-[25px] text-[#dfe3e8]">
          <button className="mr-[18px] w-[30px] whitespace-pre text-[11px]">1 : 24</button>
          {viewControls.map((control, i) => (
            <button key={i} aria-label={`View control ${i + 1}`} className="h-4 w-4 shrink-0">
              <svg viewBox="0 0 16 16">{control}</svg>
            </button>
          ))}
        </div>
        <button aria-label="Scroll left" className="ml-[7px] text-[#9aa1ad]"><ChevronLeft size={13} strokeWidth={3} /></button>
        <div className="flex flex-1 justify-center">
          <span className="h-2 w-[18px] rounded-full bg-[#848c99]" />
        </div>
        <button aria-label="Scroll right" className="mr-[18px] text-[#9aa1ad]"><ChevronRight size={13} strokeWidth={3} /></button>
      </div>
    </div>
  );
}

/* ---------- family types dialog ---------- */

const NewPage = ({ faded = false }: { faded?: boolean }) => (
  <svg viewBox="0 0 16 16" className={`h-4 w-4 ${faded ? "opacity-50" : ""}`} fill="none">
    <path d="M3.500 7.500v8h11V7L11 3.500H8.500" fill="#fff" stroke="#444b55" />
    <path d="M10.500 3.500V7.500h4" stroke="#444b55" />
    {faded ? (
      <path d="M1 1l5 5M6 1L1 6" stroke="#c0303a" strokeWidth="1.8" />
    ) : (
      <path d="M4 0v7M.5 3.500h7M1.500 1l5 5M6.500 1l-5 5" stroke="#d97b1c" />
    )}
  </svg>
);

const MoveIcon = ({ up = false }: { up?: boolean }) => (
  <svg viewBox="0 0 16 16" className="h-4 w-4 opacity-60">
    <path d={up ? "M0 6l4-5 4 5H5v9H3V6z" : "M0 10l4 5 4-5H5V1H3v9z"} fill="#7d8590" />
    <path d="M9.500 1v14M9 3h6M9 8h6M9 13h6" stroke="#7d8590" />
    <path d="M11 1h5v3h-5zM11 6h5v3h-5zM11 12h5v3h-5z" fill="#a9c6dc" />
  </svg>
);

type TypeRow = { name: string; value: string; lock?: boolean; active?: boolean };

const typeGroups: { title: string; collapsed?: boolean; rows: TypeRow[] }[] = [
  { title: "Constraints", rows: [{ name: "Default Elevation", value: "1219.20", lock: true, active: true }] },
  { title: "Materials and Finishes", rows: [{ name: "Material", value: "Paint color - Pintura color" }] },
  {
    title: "Dimensions",
    rows: [
      { name: "Length - Longitud (default)", value: "3720.00", lock: true },
      { name: "Trickness line - Espesor linea", value: "100.00", lock: true },
      { name: "Spacing", value: "1.00", lock: true },
    ],
  },
  {
    title: "IFC Parameters",
    rows: [{ name: "Type IFC Predefined Type", value: "" }, { name: "Export Type to IFC As", value: "" }],
  },
  { title: "Identity Data", collapsed: true, rows: [] },
];

const cell = "h-[18px] border-r border-b border-dotted border-[#6b6b6b] py-0 leading-[16px] whitespace-nowrap align-top";
const dialogButton = "h-[22px] rounded-[3px] border bg-[#fdfdfd] text-[11px] leading-5";

function FamilyTypesDialog() {
  return (
    <div
      role="dialog"
      aria-label="Family Types"
      className="absolute right-[130px] top-[70px] flex h-[551px] w-[558px] flex-col rounded-lg border border-[#a3a6a9] bg-[#f0f0f0] text-[#1a1a1a] shadow-[0_16px_36px_4px_rgba(0,0,0,0.35)]"
    >
      <div className="flex h-[31px] items-center justify-between rounded-t-lg bg-[#e9f4f9] pr-[7px] pb-[3px] pl-2">
        <h2 className="text-[11px]">Family Types</h2>
        <button aria-label="Close dialog"><X size={16} strokeWidth={1.5} /></button>
      </div>
      <div className="flex flex-1 flex-col pr-3 pl-[11px]">
        <div className="mt-3 flex h-[21px] items-center text-[11px]">
          <label htmlFor="type-name" className="w-[69px]">Type name:</label>
          <div className="relative h-full flex-1">
            <select
              id="type-name"
              className="h-full w-full appearance-none border border-[#cfcfcf] bg-[#fcfcfc] pl-[3px]"
            >
              <option>5490mm</option>
            </select>
            <ChevronDown size={12} strokeWidth={1.5} className="absolute right-1 top-1 text-[#333]" />
          </div>
          <div className="ml-[10px] flex gap-[14px] pr-[5px]">
            <button aria-label="New type"><NewPage /></button>
            <button aria-label="Rename type">
              <svg viewBox="0 0 16 16" className="h-4 w-4">
                <path d="M.5 1.500h15v13H.5z" fill="#fff" stroke="#444b55" />
                <path d="M2 3h9v10H2z" fill="#8dc3ec" />
                <path d="M3 12l3-7 3 7M4 10h4M12.5 4v8M11 3.5h3M11 12.5h3" stroke="#1c5f9c" fill="none" strokeWidth="1.3" />
              </svg>
            </button>
            <button aria-label="Delete type"><NewPage faded /></button>
          </div>
        </div>
        <div className="mt-[12px] flex h-[19px] items-center border-b border-[#868686] bg-white pl-[3px]">
          <input
            aria-label="Search parameters"
            placeholder="Search parameters"
            className="flex-1 text-[11px] outline-none placeholder:text-[#6d6d6d]"
          />
          <svg viewBox="0 0 16 16" className="h-4 w-4">
            <circle cx="6" cy="6" r="5" fill="#dfeee9" stroke="#5a6670" />
            <path d="M10 9.500l5 5.500" stroke="#444b55" strokeWidth="2.6" />
          </svg>
        </div>
        <table className="mt-[11px] mr-px table-fixed border-separate border-spacing-0 border-t border-l border-[#777] bg-white">
          <colgroup>
            <col className="w-[163px]" />
            <col className="w-[163px]" />
            <col />
            <col className="w-[34px]" />
          </colgroup>
          <thead>
            <tr className="bg-[#f0f0f0]">
              {["Parameter", "Value", "Formula", "Lock"].map((title) => (
                <th key={title} className="h-[21px] border-r border-b border-black p-0 font-normal leading-5">{title}</th>
              ))}
            </tr>
          </thead>
          <tbody>
            {typeGroups.map((group) => (
              <React.Fragment key={group.title}>
                <tr className="bg-[#99b4d1] text-black">
                  <th colSpan={4} className="h-[22px] border-b border-[#26364d] p-0 pl-[2px] text-left leading-[21px]">
                    <div className="flex items-center justify-between pr-[5px]">
                      {group.title}
                      <button aria-label={`Toggle ${group.title}`}><DoubleChevron down={group.collapsed} /></button>
                    </div>
                  </th>
                </tr>
                {group.rows.map((row) => (
                  <tr key={row.name}>
                    <td className={`${cell} pl-px`}>{row.name}</td>
                    <td
                      className={
                        row.active
                          ? "h-[18px] border border-black py-0 pl-px align-top leading-[15px]"
                          : `${cell} pl-[2px]`
                      }
                    >
                      {row.value}
                    </td>
                    <td className={`${cell} pl-px`}>=</td>
                    <td className={cell}>
                      {row.lock && (
                        <input
                          type="checkbox"
                          aria-label={`Lock ${row.name}`}
                          className="mt-[2px] ml-1 block h-[13px] w-[13px] appearance-none rounded-[3px] border border-[#868686] bg-[#f7f7f7]"
                        />
                      )}
                    </td>
                  </tr>
                ))}
              </React.Fragment>
            ))}
            <tr>
              {[0, 1, 2, 3].map((i) => (
                <td key={i} className="h-[99px] border-r border-b border-dotted border-[#6b6b6b]" />
              ))}
            </tr>
          </tbody>
        </table>
        <div className="mt-3 flex h-[22px] items-center gap-[14px] pl-[3px]">
          <button aria-label="Edit parameter">
            <svg viewBox="0 0 16 16" className="h-4 w-4">
              <path d="M1 15l1-4L12 1l3 3L5 14z" fill="#e8dcb8" stroke="#444b55" />
              <path d="M10 3l3 3 2-2-3-3z" fill="#555" />
            </svg>
          </button>
          <button aria-label="New parameter"><NewPage /></button>
          <button aria-label="Shared parameter">
            <svg viewBox="0 0 16 16" className="h-4 w-4">
              <path d="M1.500.5h8l3 3v12h-11z" fill="#fff" stroke="#444b55" />
              <path d="M4 4h5M4 7h6M4 10h3" stroke="#444b55" />
              <path d="M6 15.500a2.500 2.500 0 010-5 3.500 3.500 0 016.500 0 2.500 2.500 0 010 5z" fill="#dcecf9" stroke="#3f7fb8" />
            </svg>
          </button>
          <button aria-label="Delete parameter"><NewPage faded /></button>
          <button aria-label="Duplicate parameter">
            <svg viewBox="0 0 16 16" className="h-4 w-4" fill="#fff" stroke="#444b55">
              <path d="M.5.5h8v12h-8z" />
              <path d="M4.500 3.500h7l4 3.500v8.500h-11zM11.500 3.500V7h4" />
            </svg>
          </button>
          <button aria-label="Move up"><MoveIcon up /></button>
          <button aria-label="Move down"><MoveIcon /></button>
          <button aria-label="Sort ascending" className="ml-[10px]">
            <SortLetters top="A" bottom="Z" color="#555b63" arrow="#333" />
          </button>
          <button aria-label="Sort descending" className="-ml-[2px]">
            <SortLetters top="Z" bottom="A" color="#555b63" arrow="#333" />
          </button>
          <button className={`${dialogButton} ml-auto w-[124px] whitespace-nowrap border-[#cfcfcf]`}>Manage Lookup Tables</button>
        </div>
        <div className="mt-[14px] flex items-start gap-2">
          <a href="#help" className="-ml-px mr-auto text-[11px] leading-[14px] text-[#1565b0] underline">
            How do I manage family types?
          </a>
          <button className={`${dialogButton} w-[76px] border-[#2077b4]`}>OK</button>
          <button className={`${dialogButton} w-[76px] border-[#cfcfcf]`}>Cancel</button>
          <button className={`${dialogButton} w-[76px] border-[#cfcfcf]`}>Apply</button>
        </div>
      </div>
      <svg viewBox="0 0 9 9" className="absolute right-px bottom-px w-[9px]" fill="#b5b5b5">
        <path d="M6 0h2v2H6zM3 3h2v2H3zM6 3h2v2H6zM0 6h2v2H0zM3 6h2v2H3zM6 6h2v2H6z" />
      </svg>
    </div>
  );
}

/* ---------- status bar ---------- */

const Pointer = () => <path d="M7 4l8 8-3 .5 2 3-1.500.5-2-3.500L7 15z" fill="#c4cad3" />;

const statusIcons: React.ReactNode[] = [
  <g key="links"><path d="M0 2h6v3H0zM8 2h6v3H8z" fill="none" stroke="#8b919c" strokeWidth="1.5" /><Pointer /></g>,
  <g key="underlay"><path d="M0 9l5-4h9l-4 4zM3 4l4-3h9l-4 3z" fill="#7d838e" /><Pointer /></g>,
  <g key="pinned"><path d="M3 1h7v2H9v4l3 3H1l3-3V3H3z" fill="#8b919c" /><Pointer /></g>,
  <g key="face"><path d="M1 4l4-3h9v3l-5 2v8l-8 1z" fill="#7d838e" /><Pointer /></g>,
  <g key="drag"><path d="M6 0v13M0 7h12M4 2l2-2 2 2M2 5L0 7l2 2" fill="none" stroke="#aab0bb" strokeWidth="1.5" /><Pointer /></g>,
  <circle key="background" cx="8" cy="8" r="6.5" fill="none" stroke="#7d838e" strokeWidth="2" strokeDasharray="2 3" />,
  <path key="filter" d="M0 1h16v1l-6 6v7l-4-2V8L0 2z" fill="#d5dade" />,
];

function StatusBar() {
  return (
    <footer>
      <div className="flex h-[24px] items-center justify-between bg-[#3c4452] pr-[72px] pl-px">
        <span>Ready</span>
        <div className="flex items-center gap-[10px]">
          {statusIcons.map((icon, i) => (
            <svg key={i} viewBox="0 0 16 16" className="h-4 w-4">{icon}</svg>
          ))}
          <span className="-ml-[9px]">:0</span>
        </div>
      </div>
      <div className="h-2 bg-linear-to-r from-[#181f14] via-[#17201a] to-[#24190f]" />
    </footer>
  );
}

export default function App() {
  return (
    <div className="flex h-screen flex-col overflow-hidden bg-[#222831] font-['Open_Sans','Noto_Sans',sans-serif] text-[12px] text-[#e6e8eb]">
      <TitleBar />
      <MenuTabs />
      <Ribbon />
      <div className="h-[26px] bg-[#3c4452]" />
      <main className="flex min-h-0 flex-1 border-t-2 border-b-2 border-t-[#4f5968] border-b-[#222831]">
        <aside className="flex w-[273px] shrink-0 flex-col border-r border-[#2b323d] bg-[#3c4452] leading-[18px]">
          <PropertiesPalette />
          <ProjectBrowser />
        </aside>
        <div className="w-[3px] bg-[#4a5464]" />
        <ViewArea>
          <FamilyTypesDialog />
        </ViewArea>
      </main>
      <StatusBar />
    </div>
  );
}
